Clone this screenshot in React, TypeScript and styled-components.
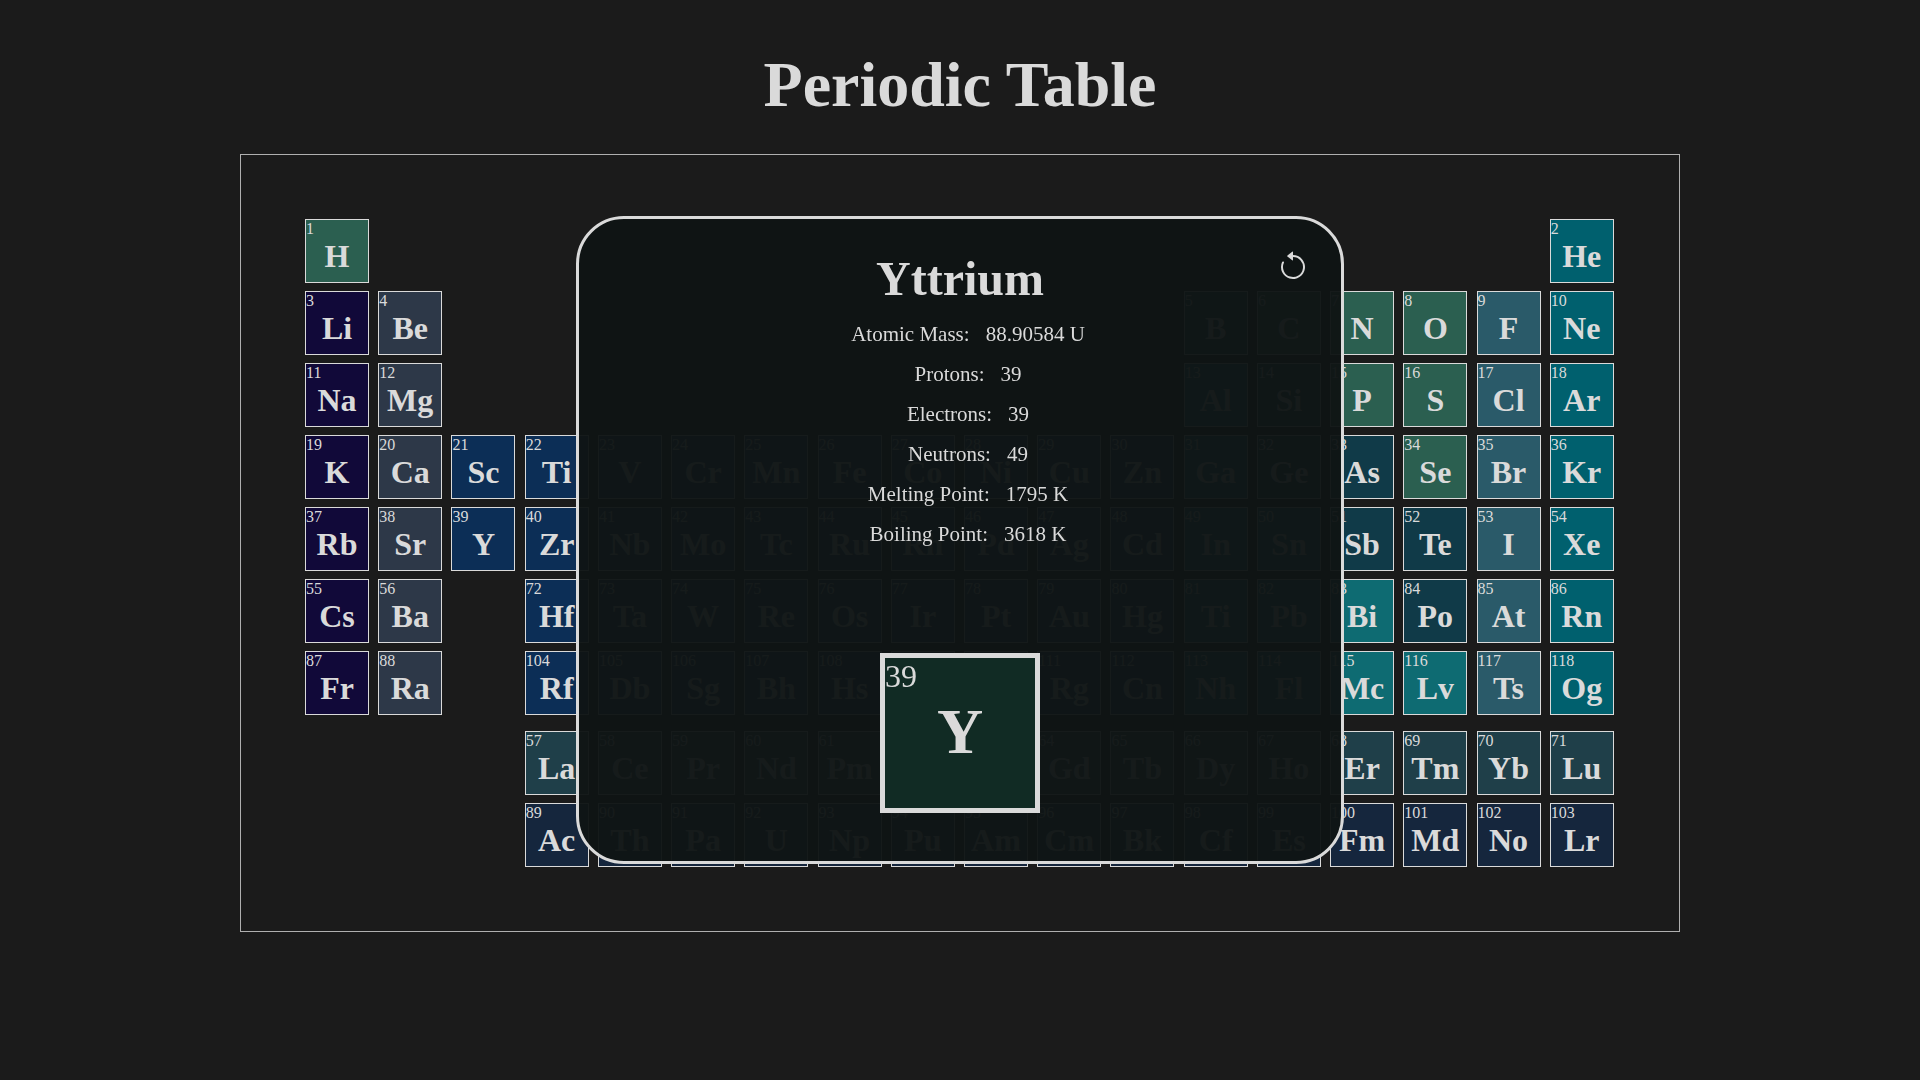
import React, { useState } from "react";
import styled, { createGlobalStyle } from "styled-components";

const GlobalStyle = createGlobalStyle`
  * {
    box-sizing: border-box;
  }
  body {
    margin: 0;
    background: #1b1b1b;
    color: #dadada;
    font-family: "Times New Roman", "Liberation Serif", serif;
  }
`;

const groups = {
  nonmetal: "#2b5f50",
  alkali: "#110939",
  alkaline: "#2d3848",
  transition: "#0c2e56",
  noble: "#00606e",
  halogen: "#2a5a69",
  metalloid: "#103a48",
  metal: "#0e6b72",
  lanthanide: "#1f3f49",
  actinide: "#15263d",
};

type Group = keyof typeof groups;

interface Element {
  number: number;
  symbol: string;
  group: Group;
  row: number;
  column: number;
}

const run = (
  row: number,
  column: number,
  number: number,
  group: Group,
  symbols: string
): Element[] =>
  symbols.split(" ").map((symbol, i) => ({
    number: number + i,
    symbol,
    group,
    row,
    column: column + i,
  }));

const elements: Element[] = [
  ...run(1, 1, 1, "nonmetal", "H"),
  ...run(1, 18, 2, "noble", "He"),
  ...run(2, 1, 3, "alkali", "Li"),
  ...run(2, 2, 4, "alkaline", "Be"),
  ...run(2, 13, 5, "metalloid", "B"),
  ...run(2, 14, 6, "nonmetal", "C N O"),
  ...run(2, 17, 9, "halogen", "F"),
  ...run(2, 18, 10, "noble", "Ne"),
  ...run(3, 1, 11, "alkali", "Na"),
  ...run(3, 2, 12, "alkaline", "Mg"),
  ...run(3, 13, 13, "metal", "Al"),
  ...run(3, 14, 14, "metalloid", "Si"),
  ...run(3, 15, 15, "nonmetal", "P S"),
  ...run(3, 17, 17, "halogen", "Cl"),
  ...run(3, 18, 18, "noble", "Ar"),
  ...run(4, 1, 19, "alkali", "K"),
  ...run(4, 2, 20, "alkaline", "Ca"),
  ...run(4, 3, 21, "transition", "Sc Ti V Cr Mn Fe Co Ni Cu Zn"),
  ...run(4, 13, 31, "metal", "Ga"),
  ...run(4, 14, 32, "metalloid", "Ge As"),
  ...run(4, 16, 34, "nonmetal", "Se"),
  ...run(4, 17, 35, "halogen", "Br"),
  ...run(4, 18, 36, "noble", "Kr"),
  ...run(5, 1, 37, "alkali", "Rb"),
  ...run(5, 2, 38, "alkaline", "Sr"),
  ...run(5, 3, 39, "transition", "Y Zr Nb Mo Tc Ru Rh Pd Ag Cd"),
  ...run(5, 13, 49, "metal", "In Sn"),
  ...run(5, 15, 51, "metalloid", "Sb Te"),
  ...run(5, 17, 53, "halogen", "I"),
  ...run(5, 18, 54, "noble", "Xe"),
  ...run(6, 1, 55, "alkali", "Cs"),
  ...run(6, 2, 56, "alkaline", "Ba"),
  ...run(6, 4, 72, "transition", "Hf Ta W Re Os Ir Pt Au Hg"),
  ...run(6, 13, 81, "metal", "Ti Pb Bi"),
  ...run(6, 16, 84, "metalloid", "Po"),
  ...run(6, 17, 85, "halogen", "At"),
  ...run(6, 18, 86, "noble", "Rn"),
  ...run(7, 1, 87, "alkali", "Fr"),
  ...run(7, 2, 88, "alkaline", "Ra"),
  ...run(7, 4, 104, "transition", "Rf Db Sg Bh Hs Mt Ds Rg Cn"),
  ...run(7, 13, 113, "metal", "Nh Fl Mc Lv"),
  ...run(7, 17, 117, "halogen", "Ts"),
  ...run(7, 18, 118, "noble", "Og"),
  ...run(9, 4, 57, "lanthanide", "La Ce Pr Nd Pm Sm Eu Gd Tb Dy Ho Er Tm Yb Lu"),
  ...run(10, 4, 89, "actinide", "Ac Th Pa U Np Pu Am Cm Bk Cf Es Fm Md No Lr"),
];

const facts = [
  ["Atomic Mass:", "88.90584 U"],
  ["Protons:", "39"],
  ["Electrons:", "39"],
  ["Neutrons:", "49"],
  ["Melting Point:", "1795 K"],
  ["Boiling Point:", "3618 K"],
];

const Page = styled.main`
  display: flex;
  flex-direction: column;
  align-items: center;
  gap: 32px;
  padding: 48px 0;
`;

const PageTitle = styled.h1`
  margin: 0;
  font-size: 64px;
  line-height: 74px;
`;

const Frame = styled.section`
  width: 75%;
  min-width: 1400px;
  padding: 64px;
  border: 1px solid #b0b0b0;
`;

const Table = styled.div`
  display: grid;
  grid-template-columns: repeat(18, 1fr);
  grid-template-rows: repeat(7, 64px) 0 repeat(2, 64px);
  gap: 8px;
`;

const Cell = styled.button<{ $group: Group; $row: number; $column: number }>`
  grid-row: ${(p) => p.$row};
  grid-column: ${(p) => p.$column};
  display: flex;
  flex-direction: column;
  width: 64px;
  height: 64px;
  padding: 0;
  border: 1px solid #dadada;
  background: ${(p) => groups[p.$group]};
  color: inherit;
  font-family: inherit;
  text-align: left;
  cursor: pointer;
`;

const CellNumber = styled.span`
  font-size: 16px;
  line-height: 18px;
`;

const CellSymbol = styled.strong`
  align-self: center;
  font-size: 32px;
  line-height: 36px;
`;

const Modal = styled.div`
  position: fixed;
  inset: 0;
  width: 40%;
  height: 60%;
  min-width: 480px;
  min-height: 600px;
  margin: auto;
  display: flex;
  flex-direction: column;
  align-items: center;
  padding: 32px 32px 48px;
  border: 3px solid #dadada;
  border-radius: 48px;
  background: rgba(15, 21, 21, 0.97);
`;

const ModalTitle = styled.h2`
  margin: 0 0 7px;
  font-size: 48px;
  line-height: 56px;
`;

const CloseButton = styled.button`
  position: absolute;
  top: 32px;
  right: 32px;
  display: flex;
  padding: 0;
  border: 0;
  background: none;
  color: inherit;
  cursor: pointer;
`;

const Facts = styled.dl`
  margin: 0;
  font-size: 21px;
  line-height: 40px;
`;

const Fact = styled.div`
  display: flex;
  justify-content: center;
`;

const FactLabel = styled.dt`
  padding: 0 16px;
`;

const FactValue = styled.dd`
  margin: 0;
`;

const Tile = styled.div`
  display: flex;
  flex-direction: column;
  width: 160px;
  height: 160px;
  margin-top: auto;
  border: 5px solid #dadada;
  background: #112b24;
`;

const TileNumber = styled.span`
  font-size: 32px;
  line-height: 36px;
`;

const TileSymbol = styled.strong`
  align-self: center;
  font-size: 64px;
  line-height: 76px;
`;

function ReturnIcon() {
  return (
    <svg width="32" height="32" viewBox="0 0 16 16" fill="currentColor" aria-hidden="true">
      <path
        fillRule="evenodd"
        d="M8 3a5 5 0 1 1-4.546 2.914.5.5 0 0 0-.908-.417A6 6 0 1 0 8 2z"
      />
      <path d="M8 4.466V.534a.25.25 0 0 0-.41-.192L5.23 2.308a.25.25 0 0 0 0 .384l2.36 1.966A.25.25 0 0 0 8 4.466" />
    </svg>
  );
}

export default function App() {
  const [open, setOpen] = useState(true);

  return (
    <>
      <GlobalStyle />
      <Page>
        <PageTitle>Periodic Table</PageTitle>
        <Frame>
          <Table>
            {elements.map((e) => (
              <Cell
                key={e.number}
                type="button"
                $group={e.group}
                $row={e.row}
                $column={e.column}
                onClick={() => setOpen(true)}
              >
                <CellNumber>{e.number}</CellNumber>
                <CellSymbol>{e.symbol}</CellSymbol>
              </Cell>
            ))}
          </Table>
        </Frame>
      </Page>
      {open && (
        <Modal role="dialog" aria-labelledby="element-name">
          <CloseButton type="button" aria-label="Back" onClick={() => setOpen(false)}>
            <ReturnIcon />
          </CloseButton>
          <ModalTitle id="element-name">Yttrium</ModalTitle>
          <Facts>
            {facts.map(([label, value]) => (
              <Fact key={label}>
                <FactLabel>{label}</FactLabel>
                <FactValue>{value}</FactValue>
              </Fact>
            ))}
          </Facts>
          <Tile>
            <TileNumber>39</TileNumber>
            <TileSymbol>Y</TileSymbol>
          </Tile>
        </Modal>
      )}
    </>
  );
}
